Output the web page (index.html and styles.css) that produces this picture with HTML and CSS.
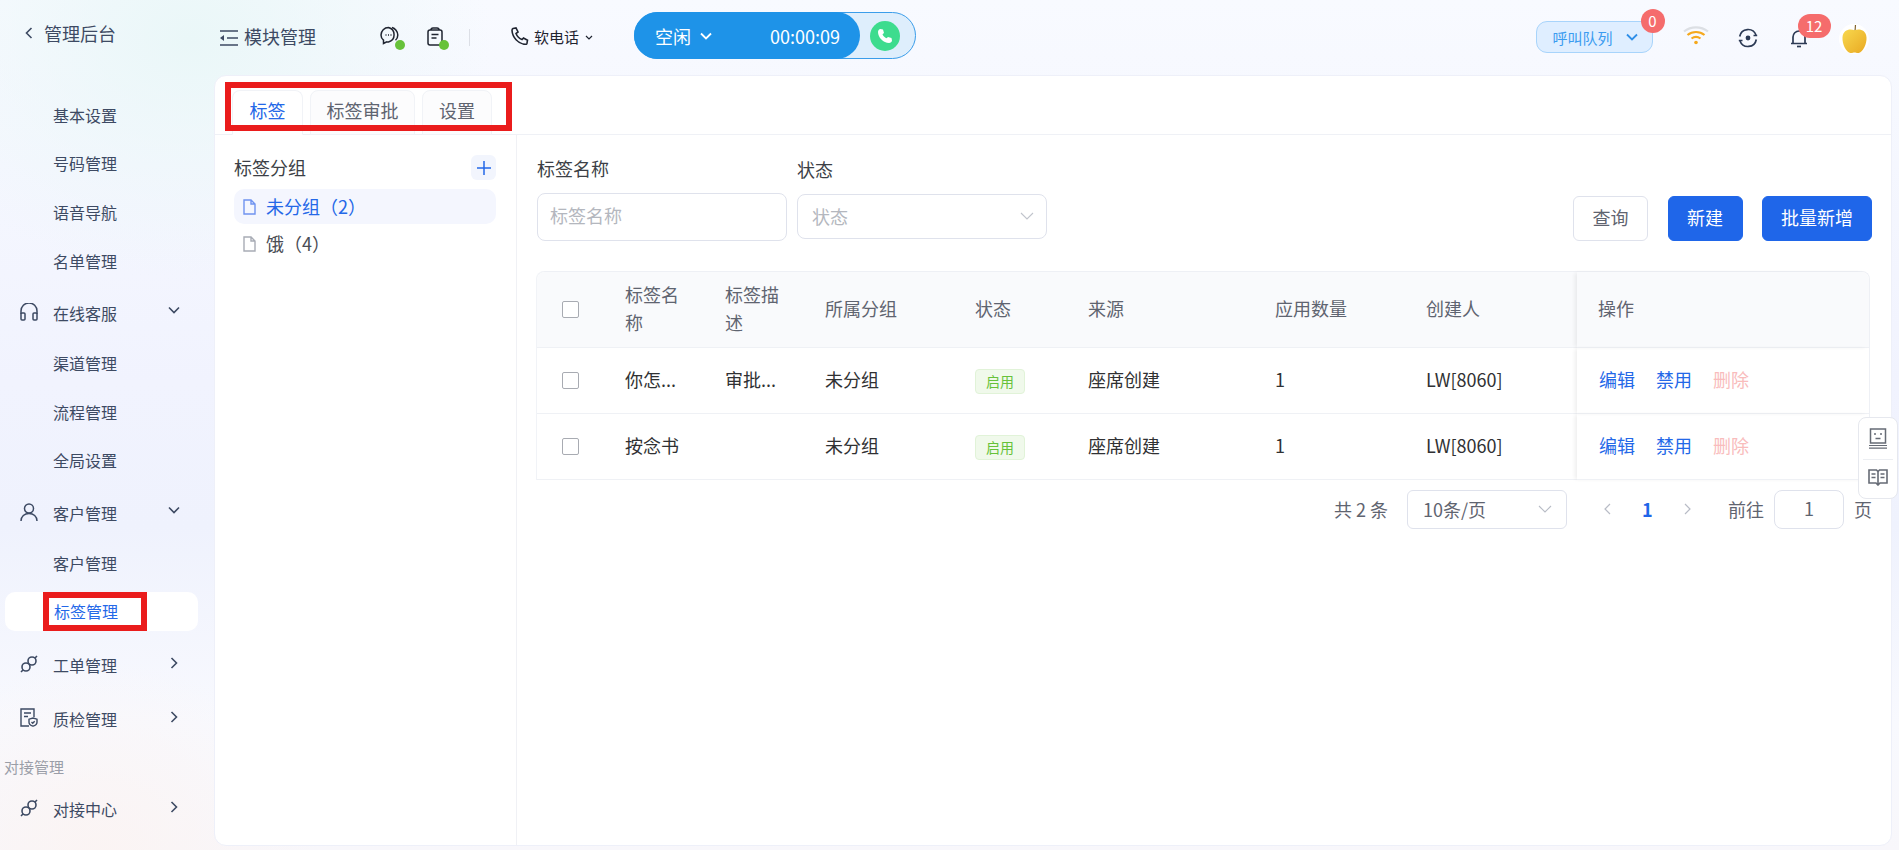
FILE: index.html
```html
<!DOCTYPE html>
<html lang="zh-CN">
<head>
  <meta charset="UTF-8">
  <title>标签管理</title>
  <link rel="stylesheet" href="styles.css">
</head>
<body>

<div class="app">
  <aside class="side">
    <div class="side-head">
      <svg class="back" width="8" height="12" viewBox="0 0 8 12"><path d="M6.500 1 1.500 6l5 5" fill="none" stroke="#3d4a63" stroke-width="1.600"/></svg>
      <span>管理后台</span>
    </div>
    <nav class="nav">
      <a class="sub">基本设置</a>
      <a class="sub">号码管理</a>
      <a class="sub">语音导航</a>
      <a class="sub">名单管理</a>
      <a class="group">
        <svg class="group-icon" width="18" height="18" viewBox="0 0 18 18" fill="none" stroke="#3d4a63" stroke-width="1.500"><path d="M1 11V8a8 8 0 0 1 16 0v3"/><rect x="1" y="10" width="4" height="7" rx="1"/><rect x="13" y="10" width="4" height="7" rx="1"/></svg>
        <span>在线客服</span>
        <svg class="caret" width="12" height="8" viewBox="0 0 12 8"><path d="M1 1.500 6 6.500l5-5" fill="none" stroke="#3d4a63" stroke-width="1.600"/></svg>
      </a>
      <a class="sub">渠道管理</a>
      <a class="sub">流程管理</a>
      <a class="sub">全局设置</a>
      <a class="group">
        <svg class="group-icon" width="18" height="18" viewBox="0 0 18 18" fill="none" stroke="#3d4a63" stroke-width="1.500"><circle cx="9" cy="5.500" r="4.500"/><path d="M1 18c0-4.500 3.500-7.500 8-7.500s8 3 8 7.500"/></svg>
        <span>客户管理</span>
        <svg class="caret" width="12" height="8" viewBox="0 0 12 8"><path d="M1 1.500 6 6.500l5-5" fill="none" stroke="#3d4a63" stroke-width="1.600"/></svg>
      </a>
      <a class="sub">客户管理</a>
      <a class="sub active">标签管理</a>
      <a class="group group-gap">
        <svg class="group-icon" width="18" height="18" viewBox="0 0 18 18" fill="none" stroke="#3d4a63" stroke-width="1.600"><circle cx="6" cy="12" r="4"/><circle cx="12" cy="6" r="4"/><path d="M3.200 14.800 1 17M14.800 3.200 17 1"/></svg>
        <span>工单管理</span>
        <svg class="caret-right" width="8" height="12" viewBox="0 0 8 12"><path d="M1.500 1l5 5-5 5" fill="none" stroke="#3d4a63" stroke-width="1.600"/></svg>
      </a>
      <a class="group">
        <svg class="group-icon" width="18" height="19" viewBox="0 0 18 19" fill="none" stroke="#3d4a63" stroke-width="1.400"><path d="M9 18H1V1h13v8M4 5h7M4 8.500h4"/><path d="M13 10l4 1.200v3c0 2-2 3.300-4 4-2-.7-4-2-4-4v-3z"/><path d="M11.500 14l1.200 1.200 2-2"/></svg>
        <span>质检管理</span>
        <svg class="caret-right" width="8" height="12" viewBox="0 0 8 12"><path d="M1.500 1l5 5-5 5" fill="none" stroke="#3d4a63" stroke-width="1.600"/></svg>
      </a>
      <div class="nav-label">对接管理</div>
      <a class="group group-last">
        <svg class="group-icon" width="18" height="18" viewBox="0 0 18 18" fill="none" stroke="#3d4a63" stroke-width="1.600"><circle cx="6" cy="12" r="4"/><circle cx="12" cy="6" r="4"/><path d="M3.200 14.800 1 17M14.800 3.200 17 1"/></svg>
        <span>对接中心</span>
        <svg class="caret-right" width="8" height="12" viewBox="0 0 8 12"><path d="M1.500 1l5 5-5 5" fill="none" stroke="#3d4a63" stroke-width="1.600"/></svg>
      </a>
    </nav>
  </aside>

  <div class="main">
    <header class="topbar">
      <svg class="fold" width="18" height="16" viewBox="0 0 18 16" fill="none" stroke="#3d4a63" stroke-width="1.500"><path d="M0 1h18M7 8h11M0 15h18"/><path d="M4 5v6L0 8z" fill="#3d4a63" stroke="none"/></svg>
      <span class="module">模块管理</span>
      <span class="status-icon chat">
        <svg width="20" height="20" viewBox="0 0 20 20" fill="none" stroke="#1f2430" stroke-width="1.500"><path d="M9.500 1.500A7.500 7.500 0 0 0 2 9c0 2.300 1 4 2.500 5.200V17.500l3.300-1.600a8 8 0 0 0 1.700.1 7.500 7.500 0 0 0 0-14.500z"/><path d="M13 1.500c3 .8 5.800 3.800 5.800 7.500 0 2-.8 4-2.300 5.300"/><path d="M6.500 9h1M9 9h1M11.500 9h1"/></svg>
        <i class="dot"></i>
      </span>
      <span class="status-icon clip">
        <svg width="16" height="19" viewBox="0 0 16 19" fill="none" stroke="#1f2430" stroke-width="1.500"><rect x="1" y="3" width="14" height="15" rx="2"/><path d="M4 3c0-1.500 1-2 2-2h4c1 0 2 .5 2 2M4.500 7.500h7M4.500 11h5"/></svg>
        <i class="dot"></i>
      </span>
      <span class="divider"></span>
      <svg class="phone" width="18" height="18" viewBox="0 0 18 18" fill="none" stroke="#1f2430" stroke-width="1.600"><path d="M2 1.500 5 1l2 4-2 1.500c1 2.500 3 5 6 6L12.500 11l4 2.200-.5 3c-.2.800-1 1.300-2 1.200C7 16.500 1.500 10.500 1 3.500c0-1 .3-1.700 1-2z"/></svg>
      <span class="softphone">软电话</span>
      <svg class="phone-caret" width="8" height="6" viewBox="0 0 8 6"><path d="M1 1l3 3 3-3" fill="none" stroke="#1f2430" stroke-width="1.200"/></svg>
      <div class="call">
        <div class="call-state">
          <span>空闲</span>
          <svg width="12" height="8" viewBox="0 0 12 8"><path d="M1 1.500l5 5 5-5" fill="none" stroke="#fff" stroke-width="1.800"/></svg>
          <span class="call-time">00:00:09</span>
        </div>
        <span class="call-btn">
          <svg width="16" height="16" viewBox="0 0 16 16"><path d="M3.500 1 6 1.500 7 5 5.500 6.300c.6 1.700 2 3.200 4 4L11 9l3.500 1 .5 2.500c0 1.500-1.500 2.500-3 2.500C6.500 15 1 9.500 1 4c0-1.500 1-3 2.500-3z" fill="#fff"/></svg>
        </span>
      </div>
      <div class="top-right">
        <div class="queue">
          <span>呼叫队列</span>
          <svg width="12" height="8" viewBox="0 0 12 8"><path d="M1 1.500l5 5 5-5" fill="none" stroke="#2f8fe8" stroke-width="1.800"/></svg>
          <b class="badge badge-queue">0</b>
        </div>
        <svg class="wifi" width="26" height="20" viewBox="0 0 26 20" fill="none" stroke-width="2.200"><path d="M1 6.500C8 1 18 1 25 6.500" stroke="#dcdfe4"/><path d="M4.500 10c5-4 12-4 17 0M8.500 13.500c3-2.300 6-2.300 9 0" stroke="#f5a81c"/><circle cx="13" cy="17.500" r="1.800" fill="#f5a81c" stroke="none"/></svg>
        <svg class="sync" width="20" height="20" viewBox="0 0 20 20" fill="none" stroke="#2c3a55" stroke-width="1.700"><path d="M1.700 8.500A8.500 8.500 0 0 1 18 7M18.300 11.500A8.500 8.500 0 0 1 2 13"/><path d="M15.500 7.500h3.700M.8 12.500h3.700" stroke-width="1.500"/><circle cx="10" cy="10" r="2.400" fill="#2c3a55" stroke="none"/></svg>
        <div class="bell">
          <svg width="18" height="20" viewBox="0 0 18 20" fill="none" stroke="#2c3a55" stroke-width="1.700"><path d="M1 15.500h16M3 15.500V9a6 6 0 0 1 12 0v6.500"/><path d="M7 18.500h4"/></svg>
          <b class="badge badge-bell">12</b>
        </div>
        <span class="avatar">
          <svg width="25" height="30" viewBox="0 0 26 31"><defs><linearGradient id="apple" x1="0" y1="0" x2="1" y2="1"><stop offset="0" stop-color="#f8d84e"/><stop offset="1" stop-color="#e9a922"/></linearGradient></defs><path d="M13.500 8 14 1" stroke="#7a5a20" stroke-width="1.200"/><path d="M13 6.500c5-2 12-.5 12.500 7.500.3 7-3.500 15-8 16-2 .4-3-.5-4.500-.5s-2.500.9-4.500.5c-4.500-1-8.300-9-8-16C1 6 8 4.500 13 6.500z" fill="url(#apple)"/></svg>
        </span>
      </div>
    </header>

    <section class="card">
      <div class="tabs">
        <a class="tab tab-on">标签</a>
        <a class="tab">标签审批</a>
        <a class="tab">设置</a>
      </div>
      <div class="card-body">
        <div class="groups">
          <div class="groups-head">
            <span>标签分组</span>
            <span class="add">
              <svg width="14" height="14" viewBox="0 0 14 14"><path d="M7 0v14M0 7h14" stroke="#2468e8" stroke-width="1.500"/></svg>
            </span>
          </div>
          <div class="group-row group-row-on">
            <svg width="13" height="16" viewBox="0 0 13 16" fill="none" stroke="#6f93f0" stroke-width="1.400"><path d="M1 1h7l4 4v10H1zM8 1v4h4"/></svg>
            <span>未分组（2）</span>
          </div>
          <div class="group-row">
            <svg width="13" height="16" viewBox="0 0 13 16" fill="none" stroke="#a8acb5" stroke-width="1.400"><path d="M1 1h7l4 4v10H1zM8 1v4h4"/></svg>
            <span>饿（4）</span>
          </div>
        </div>

        <div class="content">
          <div class="filters">
            <div class="field">
              <label>标签名称</label>
              <div class="input input-name">标签名称</div>
            </div>
            <div class="field">
              <label>状态</label>
              <div class="input input-status">
                状态
                <svg width="14" height="8" viewBox="0 0 14 8"><path d="M1 1l6 6 6-6" fill="none" stroke="#c0c4cc" stroke-width="1.100"/></svg>
              </div>
            </div>
            <div class="actions">
              <button class="btn">查询</button>
              <button class="btn btn-blue btn-new">新建</button>
              <button class="btn btn-blue btn-batch">批量新增</button>
            </div>
          </div>

          <table class="table">
            <colgroup>
              <col class="c-check"><col class="c-name"><col class="c-desc"><col class="c-group"><col class="c-state"><col class="c-src"><col class="c-count"><col class="c-user"><col>
            </colgroup>
            <thead>
              <tr>
                <th class="check-cell"><i class="check"></i></th>
                <th>标签名称</th>
                <th>标签描述</th>
                <th>所属分组</th>
                <th>状态</th>
                <th>来源</th>
                <th>应用数量</th>
                <th>创建人</th>
                <th class="fixed">操作</th>
              </tr>
            </thead>
            <tbody>
              <tr>
                <td class="check-cell"><i class="check"></i></td>
                <td>你怎...</td>
                <td>审批...</td>
                <td>未分组</td>
                <td><span class="tag">启用</span></td>
                <td>座席创建</td>
                <td>1</td>
                <td>LW[8060]</td>
                <td class="fixed"><a class="link">编辑</a><a class="link">禁用</a><a class="link link-off">删除</a></td>
              </tr>
              <tr>
                <td class="check-cell"><i class="check"></i></td>
                <td>按念书</td>
                <td></td>
                <td>未分组</td>
                <td><span class="tag">启用</span></td>
                <td>座席创建</td>
                <td>1</td>
                <td>LW[8060]</td>
                <td class="fixed"><a class="link">编辑</a><a class="link">禁用</a><a class="link link-off">删除</a></td>
              </tr>
            </tbody>
          </table>

          <div class="pager">
            <span>共 2 条</span>
            <div class="page-size">
              10条/页
              <svg width="14" height="8" viewBox="0 0 14 8"><path d="M1 1l6 6 6-6" fill="none" stroke="#b8bcc6" stroke-width="1.100"/></svg>
            </div>
            <svg class="page-prev" width="8" height="12" viewBox="0 0 8 12"><path d="M7 1 2 6l5 5" fill="none" stroke="#b8bcc6" stroke-width="1.200"/></svg>
            <b class="page-num">1</b>
            <svg class="page-next" width="8" height="12" viewBox="0 0 8 12"><path d="M1 1l5 5-5 5" fill="none" stroke="#b8bcc6" stroke-width="1.200"/></svg>
            <span class="page-go">前往</span>
            <div class="page-input">1</div>
            <span>页</span>
          </div>
        </div>
      </div>
    </section>
  </div>

  <div class="mark mark-tabs"></div>
  <div class="mark mark-side"></div>

  <div class="float">
    <svg width="18" height="21" viewBox="0 0 18 21" fill="none" stroke="#666b75" stroke-width="1.500"><rect x="1.500" y="1" width="15" height="14"/><path d="M0 17.500h18M0 20.200h18" stroke-width="1.200"/><path d="M6 5v2M12 5v2M6.500 10.500h5"/></svg>
    <span class="float-line"></span>
    <svg width="20" height="17" viewBox="0 0 20 17" fill="none" stroke="#666b75" stroke-width="1.600"><path d="M1 1h7.500L10 2.500 11.500 1H19v13h-7l-2 2-2-2H1zM10 2.500V16M3.500 5h4M3.500 8.500h4M12.500 5h4M12.500 8.500h4"/></svg>
  </div>
</div>

</body>
</html>
```

FILE: styles.css
```css
* {
  box-sizing: border-box;
}

body {
  margin: 0;
  font-family: "Noto Sans CJK SC", "Liberation Sans", sans-serif;
  color: #303133;
  overflow: hidden;
}

a {
  display: block;
}

.app {
  position: relative;
  display: flex;
  width: 1899px;
  height: 850px;
  overflow: hidden;
  background:
    radial-gradient(ellipse 300px 240px at 190px 40px, #eaf7f8 0%, rgba(234, 247, 248, 0) 100%),
    radial-gradient(ellipse 220px 200px at 100px 860px, #fbf4f3 0%, rgba(251, 244, 243, 0) 100%),
    linear-gradient(180deg, #f8faff 0%, #f1f3fe 45%, #eff2fd 62%, #f8f9fe 85%, #f8f7fb 100%);
}

/* sidebar */
.side {
  width: 214px;
  flex: none;
  font-size: 16px;
  color: #3d4a63;
}

.side-head {
  display: flex;
  align-items: center;
  height: 70px;
  padding: 0 0 5px 25px;
  font-size: 18px;
}

.back {
  margin-right: 11px;
}

.nav {
  display: flex;
  flex-direction: column;
  gap: 9.700px;
  padding-top: 25.500px;
}

.sub {
  height: 39px;
  line-height: 39px;
  margin: 0 16px 0 5px;
  padding-left: 48px;
  border-radius: 10px;
}

.active {
  background: #fff;
  color: #2468e8;
  padding-left: 49px;
}

.group {
  display: flex;
  align-items: center;
  height: 40px;
  margin-top: 4px;
  padding-left: 20px;
  position: relative;
}

.group span {
  margin-top: -2px;
}

.group-gap {
  margin-top: 5px;
}

.group-last {
  margin-top: 3px;
}

.group-icon {
  margin-right: 15px;
  margin-top: -4px;
  flex: none;
}

.caret {
  position: absolute;
  left: 168px;
  top: 12px;
}

.caret-right {
  position: absolute;
  left: 170px;
  top: 11px;
}

.nav-label {
  height: 20px;
  line-height: 20px;
  margin-top: 8px;
  padding-left: 4px;
  font-size: 15px;
  color: #9a9ea8;
}

/* top bar */
.main {
  flex: 1;
  display: flex;
  flex-direction: column;
  min-width: 0;
}

.topbar {
  display: flex;
  align-items: center;
  height: 75px;
  flex: none;
  padding: 0 30px 0 6px;
  color: #1f2430;
}

.fold {
  margin-right: 6px;
}

.module {
  width: 70px;
  font-size: 18px;
  color: #3d4a63;
  white-space: nowrap;
  margin-top: -3px;
}

.status-icon {
  position: relative;
  display: flex;
}

.chat {
  margin-left: 65px;
  margin-top: -3px;
}

.clip {
  margin-left: 28px;
  margin-top: -3px;
}

.dot {
  position: absolute;
  right: -6px;
  bottom: -4px;
  width: 10px;
  height: 10px;
  border-radius: 50%;
  background: #67c23a;
}

.divider {
  width: 1px;
  height: 17px;
  margin-left: 26px;
  background: #dcdfe6;
}

.phone {
  margin-left: 41px;
  margin-top: -3px;
}

.softphone {
  margin-left: 5px;
  font-size: 15px;
  margin-top: -2px;
}

.phone-caret {
  margin-left: 6px;
}

.call {
  display: flex;
  align-items: center;
  width: 282px;
  height: 47px;
  margin-left: 41px;
  margin-top: -4px;
  border: 1px solid #3a9dea;
  border-radius: 24px;
  background: #deeefc;
}

.call-state {
  display: flex;
  align-items: center;
  width: 226px;
  height: 47px;
  margin-left: -1px;
  padding-left: 21px;
  border-radius: 24px;
  background: #1e93e8;
  color: #fff;
  font-size: 18px;
}

.call-state svg {
  margin-left: 9px;
}

.call-time {
  margin-left: 58px;
}

.call-btn {
  display: flex;
  align-items: center;
  justify-content: center;
  width: 30px;
  height: 30px;
  margin-left: 10px;
  border-radius: 50%;
  background: #3ddc8e;
}

.top-right {
  display: flex;
  align-items: center;
  margin-left: auto;
}

.queue {
  position: relative;
  display: flex;
  align-items: center;
  width: 117px;
  height: 32px;
  padding-left: 16px;
  margin-top: -1px;
  border: 1px solid #a8d4fb;
  border-radius: 11px;
  background: #dfeeff;
  color: #3b9cf0;
  font-size: 15px;
}

.queue svg {
  margin-left: 13px;
}

.badge {
  position: absolute;
  display: block;
  background: #f56c6c;
  color: #fff;
  font-weight: 400;
  font-size: 15px;
  text-align: center;
}

.badge-queue {
  right: -13px;
  top: -13px;
  width: 24px;
  height: 24px;
  line-height: 23px;
  border-radius: 50%;
}

.wifi {
  margin-left: 30px;
  margin-top: -5px;
}

.sync {
  margin-left: 29px;
}

.bell {
  position: relative;
  display: flex;
  margin-left: 32px;
  margin-top: 1px;
}

.badge-bell {
  left: 8px;
  top: -14px;
  width: 33px;
  height: 24px;
  line-height: 23px;
  border-radius: 12px;
}

.avatar {
  display: flex;
  align-items: center;
  justify-content: center;
  width: 30px;
  height: 30px;
  margin-left: 31.500px;
  margin-top: 2px;
  border-radius: 50%;
  background: #fff;
}

/* card */
.card {
  flex: 1;
  display: flex;
  flex-direction: column;
  margin: 0 7px 4px 0;
  border: 1px solid #eef0f9;
  border-radius: 12px;
  background: #fff;
}

.tabs {
  display: flex;
  align-items: flex-end;
  gap: 7px;
  height: 59px;
  flex: none;
  padding-left: 17px;
  border-bottom: 1px solid #eff1f6;
  font-size: 18px;
  color: #5f6470;
}

.tab {
  height: 45px;
  line-height: 38px;
  margin-bottom: -1px;
  border: 1px solid #f1f3f7;
  border-radius: 8px 8px 0 0;
  background: #fcfcfd;
  text-align: center;
  white-space: nowrap;
}

.tab:first-child {
  width: 71px;
}

.tab:nth-child(2) {
  width: 105px;
}

.tab:last-child {
  width: 70px;
}

.tab-on {
  background: #fff;
  border-bottom-color: #fff;
  color: #2468e8;
}

.card-body {
  flex: 1;
  display: flex;
  min-height: 0;
}

.groups {
  width: 302px;
  flex: none;
  padding: 19px 20px 0 19px;
  border-right: 1px solid #f0f1f5;
  font-size: 18px;
}

.groups-head {
  display: flex;
  align-items: center;
  justify-content: space-between;
  height: 25px;
  margin-bottom: 10px;
  color: #3c3f46;
}

.add {
  display: flex;
  align-items: center;
  justify-content: center;
  width: 25px;
  height: 25px;
  margin-top: 2px;
  border-radius: 6px;
  background: #f2f5fd;
}

.group-row {
  display: flex;
  align-items: center;
  gap: 10px;
  height: 35px;
  margin-bottom: 2px;
  padding-left: 9px;
  border-radius: 10px;
  color: #4a4d55;
}

.group-row span {
  margin-top: -2px;
}

.group-row-on {
  margin-top: 2px;
  background: #f4f6fe;
  color: #2468e8;
}

/* filters + table */
.content {
  flex: 1;
  min-width: 0;
  padding: 22px 19px 0 20px;
}

.filters {
  display: flex;
  align-items: flex-end;
  gap: 10px;
  height: 84px;
}

.field label {
  display: block;
  height: 24px;
  line-height: 20px;
  margin-bottom: 11px;
  font-size: 18px;
  color: #3c3f46;
}

.input {
  border: 1px solid #dfe2ec;
  border-radius: 8px;
  color: #b4b7be;
  font-size: 18px;
}

.input-name {
  width: 250px;
  height: 48px;
  line-height: 42px;
  padding-left: 12px;
}

.input-status {
  display: flex;
  align-items: center;
  justify-content: space-between;
  width: 250px;
  height: 45px;
  margin-bottom: 2px;
  padding: 0 12px 2px 14px;
}

.actions {
  display: flex;
  margin-left: auto;
  gap: 19.500px;
}

.btn {
  width: 75px;
  height: 45px;
  padding: 0 0 3px;
  border: 1px solid #dfe2ec;
  border-radius: 6px;
  background: #fff;
  color: #5f6470;
  font: 18px "Noto Sans CJK SC", sans-serif;
}

.btn-blue {
  border-color: #1f66e9;
  background: #1f66e9;
  color: #fff;
}

.btn-batch {
  width: 110px;
}

.table {
  width: 1333px;
  margin-top: 29.500px;
  border-collapse: separate;
  border-spacing: 0;
  table-layout: fixed;
  border-top: 1px solid #eef0f5;
  border-right: 1px solid #eef0f5;
  border-radius: 8px 8px 0 0;
  font-size: 18px;
  box-shadow: -1px 0 0 #f1f3f7;
}

.c-check { width: 67px; }
.c-name { width: 100px; }
.c-desc { width: 100px; }
.c-group { width: 150px; }
.c-state { width: 113px; }
.c-src { width: 187px; }
.c-count { width: 151px; }
.c-user { width: 172px; }

.table th {
  height: 76px;
  padding: 0 20px 3px 21px;
  background: #f9fafc;
  border-bottom: 1px solid #eff1f5;
  color: #5f6470;
  font-weight: 400;
  text-align: left;
  line-height: 28px;
}

.table th:first-child {
  border-top-left-radius: 8px;
}

.table th:last-child {
  border-top-right-radius: 8px;
}

.table td {
  height: 66px;
  padding: 0 10px 2px 21px;
  border-bottom: 1px solid #eff1f5;
  color: #303133;
}

.table .check-cell {
  padding: 0 0 6px;
  text-align: center;
}

.check {
  display: inline-block;
  width: 17px;
  height: 17px;
  vertical-align: middle;
  border: 1px solid #a8abb2;
  border-radius: 2px;
  background: #fff;
}

.tag {
  display: inline-block;
  width: 50px;
  height: 25px;
  line-height: 23px;
  margin-top: 2px;
  border: 1px solid #e1f3d8;
  border-radius: 4px;
  background: #f0f9eb;
  color: #67c23a;
  font-size: 14px;
  text-align: center;
  vertical-align: middle;
}

.table .fixed {
  box-shadow: -3px 0 4px -1px rgba(0, 0, 0, 0.07);
}

.table td.fixed {
  display: flex;
  align-items: center;
  gap: 21px;
  padding-left: 22px;
}

.link {
  color: #2468e8;
}

.link-off {
  color: #f9bcbc;
}

/* pagination */
.pager {
  display: flex;
  align-items: center;
  justify-content: flex-end;
  height: 39px;
  margin-top: 10px;
  font-size: 18px;
  color: #5f6470;
}

.pager span {
  margin-top: -1px;
}

.page-size {
  display: flex;
  align-items: center;
  justify-content: space-between;
  width: 160px;
  height: 39px;
  margin-left: 19px;
  padding: 0 14px 0 15px;
  border: 1px solid #dfe2ec;
  border-radius: 6px;
}

.page-prev {
  margin-left: 36px;
}

.page-num {
  width: 10px;
  margin-left: 31px;
  margin-top: -1px;
  color: #1f66e9;
  font-weight: 700;
}

.page-next {
  margin-left: 32px;
}

.page-go {
  margin-left: 36px;
}

.page-input {
  width: 70px;
  height: 39px;
  line-height: 35px;
  margin: 0 10px;
  border: 1px solid #dfe2ec;
  border-radius: 8px;
  text-align: center;
}

/* red annotation boxes and the floating helper sit over the page */
.mark {
  position: absolute;
  border: 6px solid #ea1c1c;
}

.mark-tabs {
  left: 225px;
  top: 82px;
  width: 287px;
  height: 49px;
}

.mark-side {
  left: 43px;
  top: 592px;
  width: 104px;
  height: 39px;
}

.float {
  position: absolute;
  left: 1858px;
  top: 417px;
  width: 40px;
  height: 82px;
  display: flex;
  flex-direction: column;
  align-items: center;
  justify-content: space-between;
  padding: 10px 0 12px;
  background: #fff;
  border: 1px solid #e6e8ee;
  border-radius: 8px;
}

.float-line {
  width: 30px;
  height: 1px;
  background: #eceef2;
}
```
